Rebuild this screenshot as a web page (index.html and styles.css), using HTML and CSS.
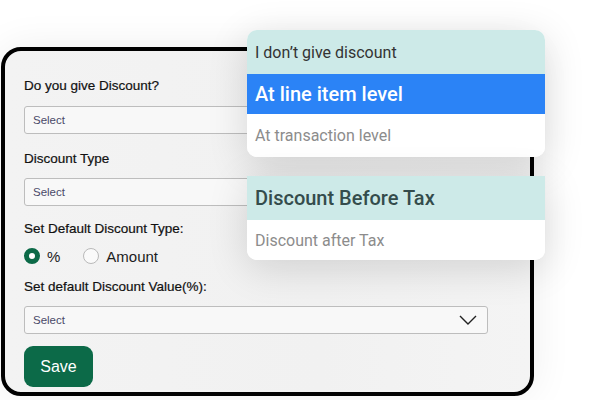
FILE: index.html
```html
<!DOCTYPE html>
<html>
<head>
<meta charset="utf-8">
<link rel="stylesheet" href="styles.css">
</head>
<body>
<div class="stage">
  <div class="frame">
    <div class="form">
      <div class="label l1">Do you give Discount?</div>
      <div class="select s1"><span>Select</span></div>
      <div class="label l2">Discount Type</div>
      <div class="select s2"><span>Select</span></div>
      <div class="label l3">Set Default Discount Type:</div>
      <div class="radios">
        <span class="radio on"></span><span class="rtext pct">%</span>
        <span class="radio"></span><span class="rtext">Amount</span>
      </div>
      <div class="label l4">Set default Discount Value(%):</div>
      <div class="select s3"><span>Select</span>
        <svg class="chev" width="18" height="10" viewBox="0 0 18 10"><path d="M1 1 L9 9 L17 1" fill="none" stroke="#222" stroke-width="1.4"/></svg>
      </div>
      <button class="save">Save</button>
    </div>
  </div>
  <div class="menu m1">
    <div class="opt teal small-dark">I don’t give discount</div>
    <div class="opt blue big">At line item level</div>
    <div class="opt white small-gray last">At transaction level</div>
  </div>
  <div class="menu m2">
    <div class="opt teal big dark">Discount Before Tax</div>
    <div class="opt white small-gray short">Discount after Tax</div>
  </div>
</div>
</body>
</html>
```

FILE: styles.css
```css
html, body {
  margin: 0;
  padding: 0;
  background: #ffffff;
  font-family: Roboto, "Liberation Sans", Arial, sans-serif;
}
.stage {
  position: relative;
  width: 595px;
  height: 400px;
  overflow: hidden;
}
.frame {
  margin: 47px 0 0 1px;
  width: 525px;
  height: 341px;
  border: 4px solid #000;
  border-radius: 20px;
  background: linear-gradient(90deg, #f3f3f3 0%, #f1f1f1 60%, #f4f4f4 100%);
  box-shadow: 0 0 40px rgba(0,0,0,0.07);
  overflow: hidden;
}
.form {
  padding: 25px 0 0 19px;
  display: flex;
  flex-direction: column;
  align-items: flex-start;
  font-family: "Liberation Sans", Arial, sans-serif;
}
.label {
  height: 20px;
  line-height: 20px;
  font-size: 13.5px;
  color: #111;
  -webkit-text-stroke: 0.2px #111;
}
.l1 { margin-bottom: 10px; }
.l2 { margin-bottom: 9px; }
.l3 { margin-bottom: 6px; }
.l4 { margin-bottom: 9px; }
.select {
  box-sizing: border-box;
  width: 464px;
  height: 28px;
  border: 1px solid #bdbdbd;
  border-radius: 3px;
  background: #f8f8f8;
  display: flex;
  align-items: center;
  justify-content: space-between;
  padding: 0 9px 0 8px;
  font-size: 11.5px;
  color: #4a4a68;
}
.s1 { margin-bottom: 15px; }
.s2 { margin-bottom: 13px; }
.s3 { margin-bottom: 12px; }
.chev { margin-right: 1px; }
.radios {
  height: 22px;
  display: flex;
  align-items: center;
  margin-bottom: 10px;
}
.radio {
  box-sizing: border-box;
  width: 16px;
  height: 16px;
  border-radius: 50%;
  border: 1px solid #b9b9b9;
  background: #fafafa;
}
.radio.on {
  border: 5px solid #0c6a48;
  background: #ffffff;
}
.rtext {
  font-size: 15px;
  color: #1c1c1c;
  margin-left: 7px;
}
.pct { margin-right: 23px; }
.save {
  width: 69px;
  height: 41px;
  border: none;
  border-radius: 9px;
  background: #0c6a48;
  color: #ffffff;
  font-family: "Liberation Sans", Arial, sans-serif;
  font-size: 16px;
  padding: 0;
}
.menu {
  position: absolute;
  left: 247px;
  width: 298px;
  border-radius: 10px;
  overflow: hidden;
  background: #ffffff;
  box-shadow: 0 8px 40px rgba(0,0,0,0.14);
}
.m1 { top: 30px; }
.m2 { top: 176px; border-radius: 0 0 10px 10px; }
.opt {
  display: flex;
  align-items: center;
  padding-left: 8px;
  height: 40px;
}
.teal { background: #cdeae8; height: 44px; }
.blue { background: #2b83f6; color: #ffffff; }
.white { background: #ffffff; }
.last { height: 43px; }
.small-dark { font-size: 16px; color: #333; }
.small-gray { font-size: 16px; color: #8c8c8c; }
.big { font-size: 20px; font-weight: 500; }
.dark { color: #344c4c; }
```
